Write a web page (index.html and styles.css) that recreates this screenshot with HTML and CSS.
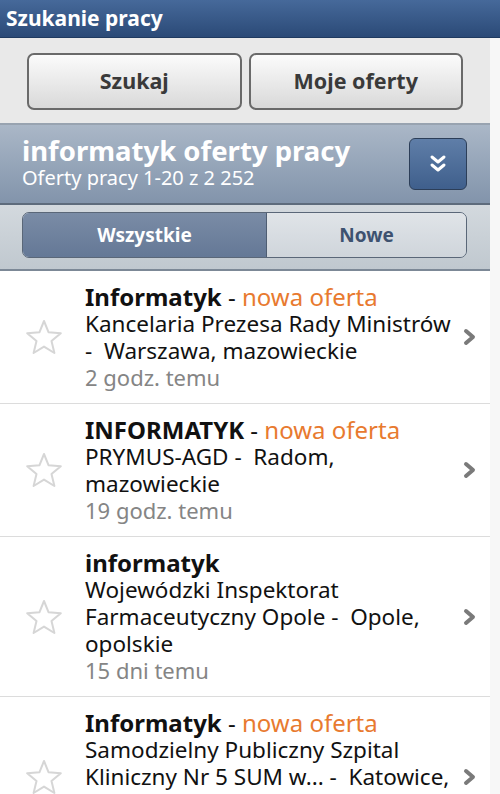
FILE: index.html
```html
<!DOCTYPE html>
<html lang="pl">
<head>
  <meta charset="UTF-8" />
  <meta name="viewport" content="width=device-width, initial-scale=1.0"/>
  <title>Szukanie pracy</title>
  <link rel="stylesheet" href="styles.css">
</head>
<body>

<header class="titlebar">Szukanie pracy</header>

<div class="page">
  <div class="toolbar">
    <button class="btn" type="button">Szukaj</button>
    <button class="btn" type="button">Moje oferty</button>
  </div>

  <div class="search-head">
    <div class="search-text">
      <h1>informatyk oferty pracy</h1>
      <p>Oferty pracy 1-20 z 2 252</p>
    </div>
    <button class="more" type="button" aria-label="Więcej">
      <svg width="20" height="24" viewBox="0 0 20 24">
        <path d="M4 5 L10 10 L16 5" fill="none" stroke="#fff" stroke-width="3" stroke-linecap="round" stroke-linejoin="round"/>
        <path d="M4 13 L10 18 L16 13" fill="none" stroke="#fff" stroke-width="3" stroke-linecap="round" stroke-linejoin="round"/>
      </svg>
    </button>
  </div>

  <div class="tabs-bar">
    <div class="tabs">
      <div class="tab active">Wszystkie</div>
      <div class="tab">Nowe</div>
    </div>
  </div>

  <ul class="offers">
    <li class="offer">
      <svg class="star" width="38" height="36" viewBox="0 0 38 36"><path d="M19 2 L23.6 13.3 L35.8 14.2 L26.5 22.1 L29.4 34 L19 27.6 L8.6 34 L11.5 22.1 L2.2 14.2 L14.4 13.3 Z" fill="none" stroke="#d6d6d6" stroke-width="2" stroke-linejoin="round"/></svg>
      <div class="offer-body">
        <div class="offer-title"><b>Informatyk</b> - <span class="new">nowa oferta</span></div>
        <div>Kancelaria Prezesa Rady Ministrów -&nbsp; Warszawa, mazowieckie</div>
        <div class="time">2 godz. temu</div>
      </div>
      <svg class="chev" width="14" height="18" viewBox="0 0 14 18"><path d="M3 3 L10 9 L3 15" fill="none" stroke="#7a7a7a" stroke-width="4" stroke-linecap="round" stroke-linejoin="round"/></svg>
    </li>
    <li class="offer">
      <svg class="star" width="38" height="36" viewBox="0 0 38 36"><path d="M19 2 L23.6 13.3 L35.8 14.2 L26.5 22.1 L29.4 34 L19 27.6 L8.6 34 L11.5 22.1 L2.2 14.2 L14.4 13.3 Z" fill="none" stroke="#d6d6d6" stroke-width="2" stroke-linejoin="round"/></svg>
      <div class="offer-body">
        <div class="offer-title"><b>INFORMATYK</b> - <span class="new">nowa oferta</span></div>
        <div>PRYMUS-AGD -&nbsp; Radom, mazowieckie</div>
        <div class="time">19 godz. temu</div>
      </div>
      <svg class="chev" width="14" height="18" viewBox="0 0 14 18"><path d="M3 3 L10 9 L3 15" fill="none" stroke="#7a7a7a" stroke-width="4" stroke-linecap="round" stroke-linejoin="round"/></svg>
    </li>
    <li class="offer">
      <svg class="star" width="38" height="36" viewBox="0 0 38 36"><path d="M19 2 L23.6 13.3 L35.8 14.2 L26.5 22.1 L29.4 34 L19 27.6 L8.6 34 L11.5 22.1 L2.2 14.2 L14.4 13.3 Z" fill="none" stroke="#d6d6d6" stroke-width="2" stroke-linejoin="round"/></svg>
      <div class="offer-body">
        <div class="offer-title"><b>informatyk</b></div>
        <div>Wojewódzki Inspektorat Farmaceutyczny Opole -&nbsp; Opole, opolskie</div>
        <div class="time">15 dni temu</div>
      </div>
      <svg class="chev" width="14" height="18" viewBox="0 0 14 18"><path d="M3 3 L10 9 L3 15" fill="none" stroke="#7a7a7a" stroke-width="4" stroke-linecap="round" stroke-linejoin="round"/></svg>
    </li>
    <li class="offer">
      <svg class="star" width="38" height="36" viewBox="0 0 38 36"><path d="M19 2 L23.6 13.3 L35.8 14.2 L26.5 22.1 L29.4 34 L19 27.6 L8.6 34 L11.5 22.1 L2.2 14.2 L14.4 13.3 Z" fill="none" stroke="#d6d6d6" stroke-width="2" stroke-linejoin="round"/></svg>
      <div class="offer-body">
        <div class="offer-title"><b>Informatyk</b> - <span class="new">nowa oferta</span></div>
        <div>Samodzielny Publiczny Szpital Kliniczny Nr 5 SUM w... -&nbsp; Katowice, śląskie</div>
        <div class="time">3 dni temu</div>
      </div>
      <svg class="chev" width="14" height="18" viewBox="0 0 14 18"><path d="M3 3 L10 9 L3 15" fill="none" stroke="#7a7a7a" stroke-width="4" stroke-linecap="round" stroke-linejoin="round"/></svg>
    </li>
  </ul>
</div>

</body>
</html>
```

FILE: styles.css
```css
* { box-sizing: border-box; margin: 0; padding: 0; }

body {
  font-family: 'Noto Sans', 'DejaVu Sans', sans-serif;
  background: #f7f7f7;
  color: #111;
  height: 794px;
  overflow: hidden;
}

.titlebar {
  height: 38px;
  background: linear-gradient(#46699a, #2b4a77);
  border-bottom: 1px solid #1f3a60;
  color: #fff;
  font-weight: 700;
  font-size: 21px;
  line-height: 36px;
  padding-left: 6px;
}

.page {
  width: 490px;
  background: #fff;
}

.toolbar {
  display: flex;
  gap: 7px;
  padding: 15px 27px 13px;
  background: #e9e9e9;
  border-bottom: 2px solid #98a3b0;
}

.btn {
  flex: 1;
  height: 57px;
  border: 2px solid #6a6a6a;
  border-radius: 7px;
  background: linear-gradient(#fbfbfb, #d9d9d9);
  font-family: inherit;
  font-weight: 700;
  font-size: 21.5px;
  color: #3a3a3a;
  padding-bottom: 3px;
}

.search-head {
  height: 80px;
  display: flex;
  align-items: center;
  padding: 0 23px 0 22px;
  background: linear-gradient(#aab7c7, #8294ab);
  border-bottom: 2px solid #5d6b7c;
}

.search-text { flex: 1; color: #fff; margin-top: -3px; }

.search-text h1 {
  font-size: 27.5px;
  font-weight: 700;
  line-height: 31px;
}

.search-text p {
  font-size: 20px;
  line-height: 24px;
}

.more {
  width: 58px;
  height: 52px;
  border: 1px solid #2c3e58;
  border-radius: 6px;
  background: linear-gradient(#5f7ea8, #3f5f8c);
  display: flex;
  align-items: center;
  justify-content: center;
}

.tabs-bar {
  padding: 7px 23px 11px 22px;
  background: linear-gradient(#d3d9de, #c0c8cf);
  border-bottom: 2px solid #7c8896;
}

.tabs {
  display: flex;
  height: 46px;
  border: 1px solid #5a6778;
  border-radius: 7px;
  overflow: hidden;
}

.tab {
  flex: 1;
  display: flex;
  align-items: center;
  justify-content: center;
  font-weight: 700;
  font-size: 19px;
  color: #3e5270;
  background: linear-gradient(#e0e4e8, #cfd5db);
}

.tab.active {
  flex: 0 0 244px;
  color: #fff;
  background: linear-gradient(#7a8ca6, #647896);
  border-right: 1px solid #4e5d72;
}

.offers { list-style: none; }

.offer {
  display: flex;
  align-items: center;
  padding: 12px 0;
  border-bottom: 1px solid #dcdcdc;
  font-size: 22.5px;
  line-height: 27px;
}

.star { margin: 0 22px 0 25px; flex-shrink: 0; }

.offer-body { flex: 1; }

.offer-title { font-size: 24px; }

.offer-title b { font-weight: 700; }

.new { color: #e87a2f; }

.time { color: #858585; font-size: 22px; }

.chev { margin: 0 13px 0 12px; flex-shrink: 0; }
```
